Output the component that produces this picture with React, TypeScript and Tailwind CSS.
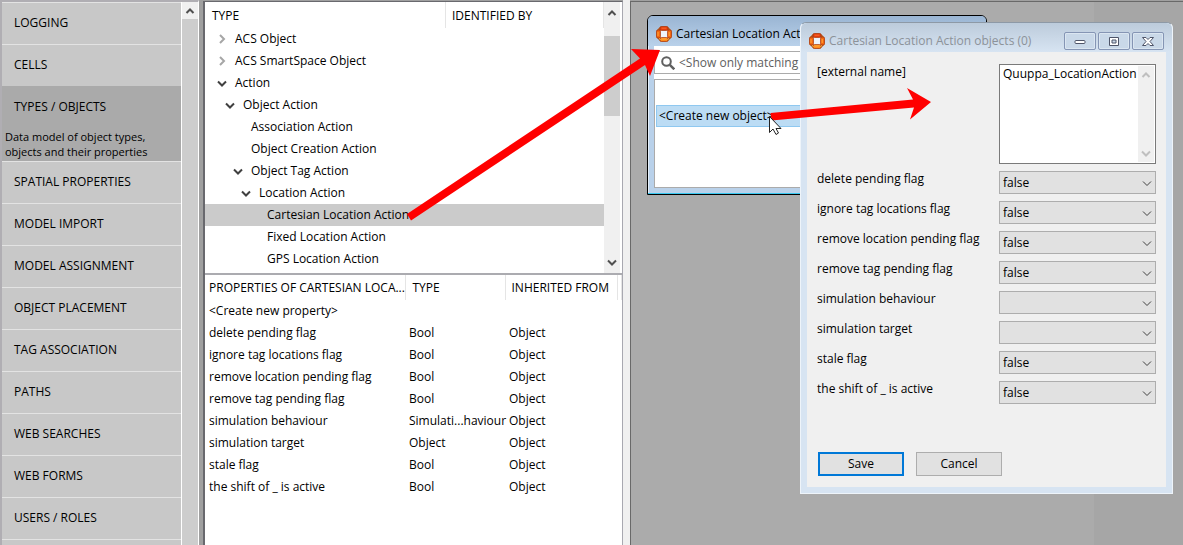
import type { ReactNode } from "react";

const navItems = [
  { label: "LOGGING" },
  { label: "CELLS" },
  {
    label: "TYPES / OBJECTS",
    description: "Data model of object types, objects and their properties",
  },
  { label: "SPATIAL PROPERTIES" },
  { label: "MODEL IMPORT" },
  { label: "MODEL ASSIGNMENT" },
  { label: "OBJECT PLACEMENT" },
  { label: "TAG ASSOCIATION" },
  { label: "PATHS" },
  { label: "WEB SEARCHES" },
  { label: "WEB FORMS" },
  { label: "USERS / ROLES" },
];

type TreeRow = { label: string; indent: string; state?: "open" | "closed"; selected?: boolean };

const typeRows: TreeRow[] = [
  { label: "ACS Object", indent: "pl-3", state: "closed" },
  { label: "ACS SmartSpace Object", indent: "pl-3", state: "closed" },
  { label: "Action", indent: "pl-3", state: "open" },
  { label: "Object Action", indent: "pl-5", state: "open" },
  { label: "Association Action", indent: "pl-7" },
  { label: "Object Creation Action", indent: "pl-7" },
  { label: "Object Tag Action", indent: "pl-7", state: "open" },
  { label: "Location Action", indent: "pl-9", state: "open" },
  { label: "Cartesian Location Action", indent: "pl-11", selected: true },
  { label: "Fixed Location Action", indent: "pl-11" },
  { label: "GPS Location Action", indent: "pl-11" },
];

const properties = [
  ["<Create new property>", "", ""],
  ["delete pending flag", "Bool", "Object"],
  ["ignore tag locations flag", "Bool", "Object"],
  ["remove location pending flag", "Bool", "Object"],
  ["remove tag pending flag", "Bool", "Object"],
  ["simulation behaviour", "Simulati...haviour", "Object"],
  ["simulation target", "Object", "Object"],
  ["stale flag", "Bool", "Object"],
  ["the shift of _ is active", "Bool", "Object"],
];

const fields = [
  { label: "delete pending flag", value: "false" },
  { label: "ignore tag locations flag", value: "false" },
  { label: "remove location pending flag", value: "false" },
  { label: "remove tag pending flag", value: "false" },
  { label: "simulation behaviour", value: "" },
  { label: "simulation target", value: "" },
  { label: "stale flag", value: "false" },
  { label: "the shift of _ is active", value: "false" },
];

function Chevron({ d, className }: { d: string; className: string }) {
  return (
    <svg viewBox="0 0 10 10" className={`h-[10px] w-[10px] shrink-0 fill-none ${className}`}>
      <path d={d} stroke="currentColor" />
    </svg>
  );
}

const UP = "M1.5 7 L5 3.5 L8.5 7";
const DOWN = "M1 3.5 L5 7.5 L9 3.5";
const RIGHT = "M3 1 L7 5 L3 9";

function AppIcon() {
  return (
    <svg viewBox="0 0 16 16" className="h-4 w-4 shrink-0">
      <path d="M5 2h6l3 3v6l-3 3H5l-3-3V5z" fill="#eef3fa" stroke="#b5561f" strokeWidth="3" />
      <g stroke="#a83a10" strokeWidth="0.7">
        <rect x="4" y="0.5" width="8" height="4" rx="1.5" fill="#e23c0c" />
        <rect x="4" y="11.5" width="8" height="4" rx="1.5" fill="#ff8a1c" />
        <rect x="0.5" y="4" width="4" height="8" rx="1.5" fill="#f4660f" />
        <rect x="11.5" y="4" width="4" height="8" rx="1.5" fill="#f4660f" />
      </g>
      <path d="M5.5 2.2h5" stroke="#ff6a2c" />
      <path d="M5.5 13h5M2 6v4M13.200 6v4" stroke="#ffab3a" />
      <path d="M3 12.500l1.500 1M13 12.500l-1.500 1" stroke="#ffc44a" />
    </svg>
  );
}

function WindowButton({ label, children }: { label: string; children: ReactNode }) {
  return (
    <button
      aria-label={label}
      className="flex h-[18px] w-8 items-center justify-center rounded-[2px] border border-[#8595b4] bg-[#c9d8e8] shadow-[inset_0_0_0_1px_#dbe6f1]"
    >
      <svg viewBox="0 0 14 12" className="h-3 w-[14px]" fill="#fff" stroke="#4e5468">
        {children}
      </svg>
    </button>
  );
}

function Sidebar() {
  return (
    <aside className="flex w-[199px] shrink-0 overflow-hidden border-t-2 border-l-2 border-[#b0aeb3] border-r border-r-white bg-[#cdcdcd]">
      <nav className="flex-1 border-r border-white bg-[#c8c8c8]">
        {navItems.map((item) => (
          <a
            key={item.label}
            href="#"
            className={`block border-t ${item.description ? "h-[75px] border-[#aaa] bg-[#aaa]" : "h-[42px] border-[#e3e3e3]"}`}
          >
            <span className="block pl-3 leading-[40px]">{item.label}</span>
            {item.description && (
              <span className="mt-[2px] block pl-[3px] text-[11px] leading-[15px]">{item.description}</span>
            )}
          </a>
        ))}
        <div className="border-t border-[#e3e3e3]" />
      </nav>
      <div className="w-4">
        <div className="flex h-[17px] items-center justify-center bg-[#f0f0f0]">
          <Chevron d={UP} className="stroke-2 text-[#505050]" />
        </div>
      </div>
    </aside>
  );
}

function TypeTree() {
  return (
    <div className="flex h-[271px] shrink-0">
      <table className="w-full flex-1 table-fixed self-start text-left">
        <thead>
          <tr className="h-[26px]">
            <th className="pt-[2px] pl-[7px] font-normal">TYPE</th>
            <th className="w-[158px] border-x border-[#e5e5e5] pt-[2px] pl-[6px] font-normal">IDENTIFIED BY</th>
          </tr>
        </thead>
        <tbody>
          {typeRows.map((row) => (
            <tr key={row.label} className={`h-[22px] ${row.selected ? "bg-[#cbcbcb]" : ""}`}>
              <td className={row.indent}>
                <div className="flex items-center gap-2 whitespace-nowrap">
                  {row.state === "open" && <Chevron d={DOWN} className="stroke-2 text-[#404040]" />}
                  {row.state === "closed" && <Chevron d={RIGHT} className="stroke-2 text-[#a6a6a6]" />}
                  {!row.state && <span className="w-[10px] shrink-0" />}
                  {row.label}
                </div>
              </td>
              <td />
            </tr>
          ))}
        </tbody>
      </table>
      <div className="mr-[2px] flex w-4 shrink-0 flex-col items-center bg-[#f0f0f0] py-[6px]">
        <Chevron d={UP} className="stroke-2 text-[#505050]" />
        <div className="mt-[18px] h-20 w-full bg-[#cdcdcd]" />
        <Chevron d={DOWN} className="mt-auto stroke-2 text-[#505050]" />
      </div>
    </div>
  );
}

function PropertyTable() {
  return (
    <div className="flex-1 border-t-2 border-[#ababb0]">
      <table className="w-full table-fixed text-left">
        <thead>
          <tr className="h-[25px] whitespace-nowrap">
            <th className="w-[200px] pl-1 font-normal">PROPERTIES OF CARTESIAN LOCA...</th>
            <th className="w-[100px] border-l border-[#e5e5e5] pl-[7px] font-normal">TYPE</th>
            <th className="border-x border-[#e5e5e5] pl-[6px] font-normal">INHERITED FROM</th>
            <th className="w-1 border-r border-[#e5e5e5]" />
          </tr>
        </thead>
        <tbody>
          {properties.map(([name, type, from]) => (
            <tr key={name} className="h-[22px] whitespace-nowrap">
              <td className="pl-1">{name}</td>
              <td className="pl-1">{type}</td>
              <td className="pl-1">{from}</td>
              <td />
            </tr>
          ))}
        </tbody>
      </table>
    </div>
  );
}

function ObjectListWindow() {
  return (
    <section className="absolute top-[13px] left-4 h-[180px] w-[340px] overflow-hidden rounded-t-md border border-black bg-[#b9d1ea] px-[6px] shadow-[inset_0_-1px_0_#38c8f0,inset_1px_0_0_#e4eef8]">
      <header className="-mx-[6px] flex h-[30px] items-center gap-1 bg-linear-to-b from-[#9ab5d3] to-[#b9d1ea] px-2 pt-[6px]">
        <AppIcon />
        <h2>Cartesian Location Action</h2>
      </header>
      <div className="h-[142px] bg-white pt-[5px]">
        <label className="flex h-[23px] items-center gap-1 border border-[#ababab] px-[6px]">
          <svg viewBox="0 0 14 14" className="h-[14px] w-[14px] shrink-0 fill-none stroke-[#606060] stroke-2">
            <circle cx="5.500" cy="5.500" r="4.300" />
            <path d="M8.800 8.800l4.500 4.500" strokeWidth="2.500" />
          </svg>
          <input
            aria-label="Filter"
            placeholder="<Show only matching"
            className="w-full outline-none placeholder:text-[#606060]"
          />
        </label>
        <div className="mt-[5px] h-[109px] border border-[#ababab] px-[1px] pt-[25px]">
          <button className="block h-[22px] w-full border border-[#8fc8f0] bg-[#bcdcf4] pl-[2px] text-left">
            {"<Create new object>"}
          </button>
        </div>
      </div>
    </section>
  );
}

function ObjectEditorWindow() {
  return (
    <section className="absolute top-5 left-[169px] w-[373px] rounded-t-md border border-[#eef4fa] border-t-[#8d99a6] bg-[#d7e4f2] px-[6px] pb-[6px]">
      <header className="-mx-[6px] flex h-[29px] items-center gap-1 rounded-t-md bg-linear-to-b from-[#bccbdb] to-[#d7e4f2] px-2 pt-[6px]">
        <AppIcon />
        <h2 className="flex-1 text-[#8c9299]">Cartesian Location Action objects (0)</h2>
        <div className="flex gap-[2px]">
          <WindowButton label="Minimize">
            <rect x="2" y="5.500" width="10" height="3" rx="1" />
          </WindowButton>
          <WindowButton label="Maximize">
            <path fillRule="evenodd" d="M2.500 2.500h9v8h-9zM5 5h4v3H5z" />
          </WindowButton>
          <WindowButton label="Close">
            <path d="M1.500 2.500h3.500l2 2 2-2h3.500l-3.500 4 3.500 4H9l-2-2-2 2H1.500l3.500-4z" />
          </WindowButton>
        </div>
      </header>
      <form className="h-[435px] bg-[#f0f0f0] px-[10px] pt-3">
        <div className="flex justify-between">
          <label htmlFor="external-name">[external name]</label>
          <div className="flex h-[100px] w-[157px] border border-[#7a7a7a] bg-white p-[1px]">
            <textarea
              id="external-name"
              defaultValue="Quuppa_LocationAction"
              className="w-full flex-1 resize-none overflow-hidden whitespace-nowrap pl-[2px] outline-none"
            />
            <div className="flex w-4 shrink-0 flex-col items-center justify-between bg-[#f0f0f0] py-1">
              <Chevron d={UP} className="stroke-2 text-[#bfbfbf]" />
              <Chevron d={DOWN} className="stroke-2 text-[#bfbfbf]" />
            </div>
          </div>
        </div>
        <div className="mt-[7px] flex flex-col gap-[7px]">
          {fields.map((field) => (
            <div key={field.label} className="flex items-start justify-between">
              <label htmlFor={field.label}>{field.label}</label>
              <div className="grid w-[157px] items-center">
                <select
                  id={field.label}
                  defaultValue={field.value}
                  className="col-start-1 row-start-1 h-[23px] w-full appearance-none border border-[#adadad] bg-[#e1e1e1] pl-[3px]"
                >
                  <option value={field.value}>{field.value}</option>
                </select>
                <Chevron
                  d={DOWN}
                  className="pointer-events-none col-start-1 row-start-1 mr-1 justify-self-end text-[#404040]"
                />
              </div>
            </div>
          ))}
        </div>
        <div className="mt-12 flex gap-3 pl-[1px]">
          <button type="button" className="h-6 w-[86px] border-2 border-[#0078d7] bg-[#e1e1e1]">
            Save
          </button>
          <button type="button" className="h-6 w-[86px] border border-[#adadad] bg-[#e1e1e1]">
            Cancel
          </button>
        </div>
      </form>
    </section>
  );
}

function Annotations() {
  return (
    <svg className="pointer-events-none absolute top-0 left-0 h-[240px] w-[940px]" viewBox="0 0 940 240">
      <g fill="#f00">
        <path d="M407 214L640 58.500L631 49L660 50L650 76L645 65L411 220.500z" />
        <path d="M770.500 113L913 99.500L907 88L931 102L910 119.500L914 107.500L771.500 120.500z" />
      </g>
      <path
        d="M769.500 116.500V132.500L773 129L776 134.500L778.500 133L776 128.500H781z"
        fill="#fff"
        stroke="#222"
      />
    </svg>
  );
}

export default function App() {
  return (
    <div className="relative flex h-screen overflow-hidden bg-[#a0a0a0] font-['Open_Sans','Noto_Sans',sans-serif] text-[12px] leading-4 text-black">
      <Sidebar />
      <main className="mt-[1px] ml-1 flex w-[420px] shrink-0 flex-col border-t border-l-2 border-[#69696e] border-r border-r-[#a8a8b0] bg-white">
        <TypeTree />
        <PropertyTable />
      </main>
      <div className="w-[7px] shrink-0 bg-[#f0f0f0]" />
      <div className="relative mt-[1px] flex flex-1 border-t border-l border-[#696969] bg-[#ababab]">
        <div className="ml-auto w-[89px] bg-[#a6a6a6]" />
        <ObjectListWindow />
        <ObjectEditorWindow />
      </div>
      <Annotations />
    </div>
  );
}
